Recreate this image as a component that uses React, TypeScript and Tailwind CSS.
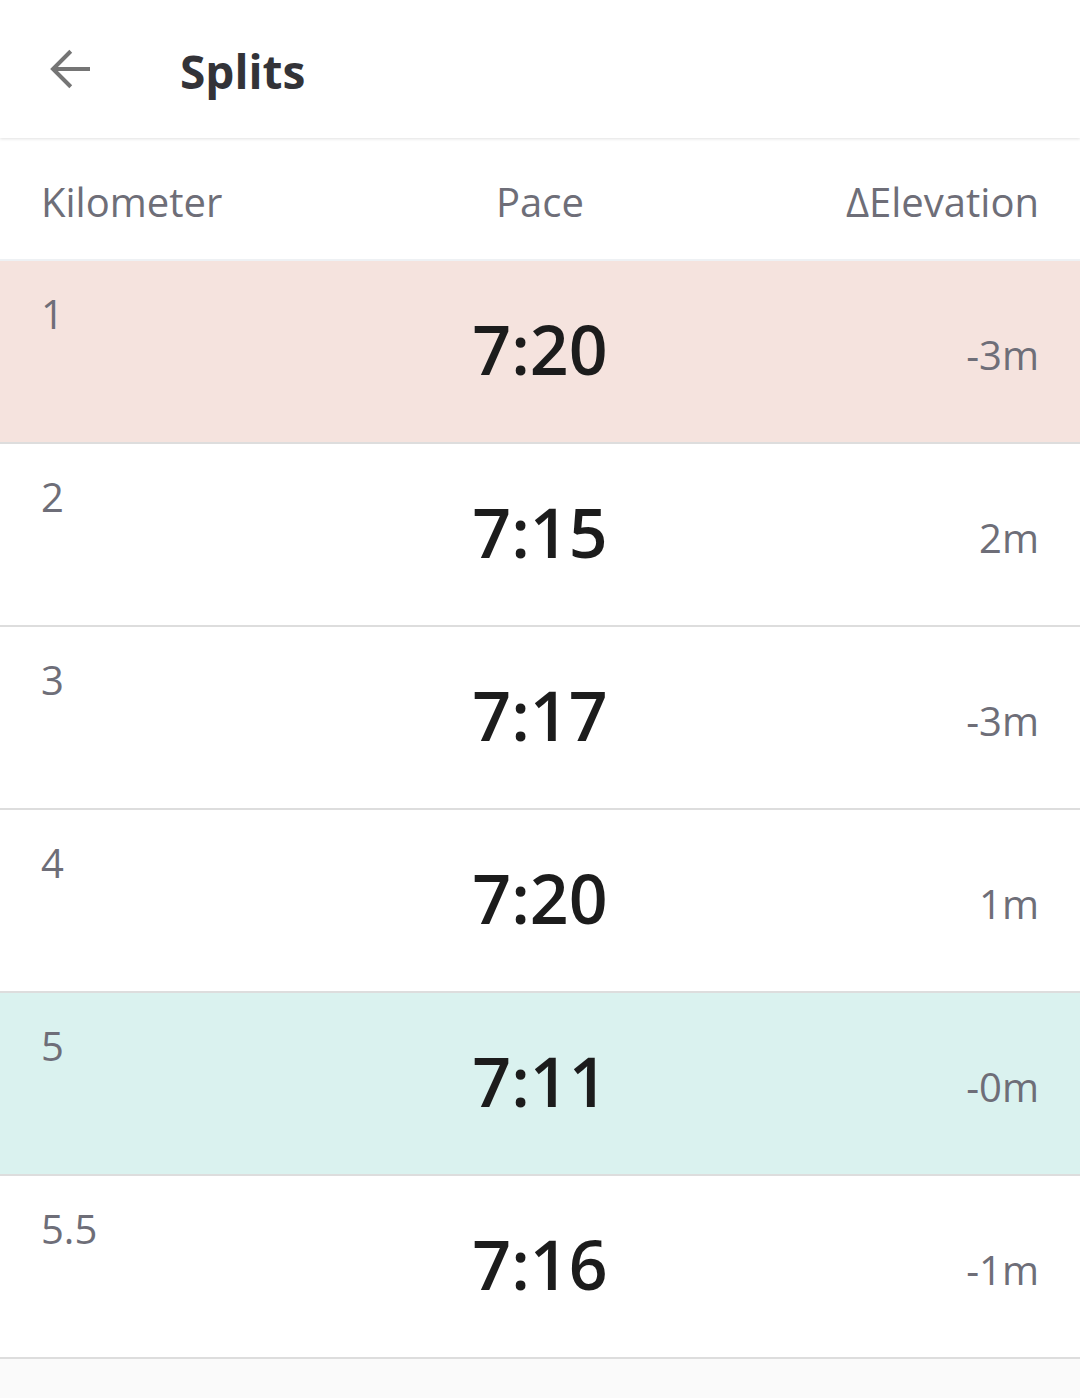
const splits = [
  { km: "1", pace: "7:20", elev: "-3m", bg: "bg-[#f5e3de]" },
  { km: "2", pace: "7:15", elev: "2m", bg: "bg-white" },
  { km: "3", pace: "7:17", elev: "-3m", bg: "bg-white" },
  { km: "4", pace: "7:20", elev: "1m", bg: "bg-white" },
  { km: "5", pace: "7:11", elev: "-0m", bg: "bg-[#daf2ef]" },
  { km: "5.5", pace: "7:16", elev: "-1m", bg: "bg-white" },
];

export default function App() {
  return (
    <div className="min-h-screen bg-[#fafafa] font-['Open_Sans',sans-serif]">
      {/* Top bar */}
      <div className="relative z-10 flex h-[138px] items-center bg-white shadow-[0_1px_3px_rgba(0,0,0,0.12)]">
        <button className="ml-[40px] flex h-[60px] w-[60px] items-center justify-center text-[#757575]">
          <svg viewBox="0 0 24 24" className="h-[60px] w-[60px]" fill="none" stroke="currentColor" strokeWidth="1.6">
            <path d="M20 12H5.2" />
            <path d="M12.3 4.9 5.2 12l7.1 7.1" />
          </svg>
        </button>
        <h1 className="ml-[80px] pt-[4px] text-[46px] font-bold leading-none text-[#333338]">Splits</h1>
      </div>

      {/* Column headers */}
      <div className="grid h-[123px] grid-cols-3 items-center border-b-2 border-[#eef1f4] bg-white px-[41px] pt-[6px] text-[40px] text-[#6e6e78]">
        <span>Kilometer</span>
        <span className="text-center">Pace</span>
        <span className="text-right">ΔElevation</span>
      </div>

      {/* Rows */}
      {splits.map((s, i) => (
        <div
          key={i}
          className={`grid h-[183px] grid-cols-3 items-start border-b-2 border-[#dddddd] px-[41px] ${s.bg}`}
        >
          <span className="pt-[23px] text-[40px] text-[#6e6e78]">{s.km}</span>
          <span className="pt-[37px] text-center text-[68px] font-semibold text-[#1c1c1c]">{s.pace}</span>
          <span className="pt-[64px] text-right text-[40px] text-[#6e6e78]">{s.elev}</span>
        </div>
      ))}
    </div>
  );
}
